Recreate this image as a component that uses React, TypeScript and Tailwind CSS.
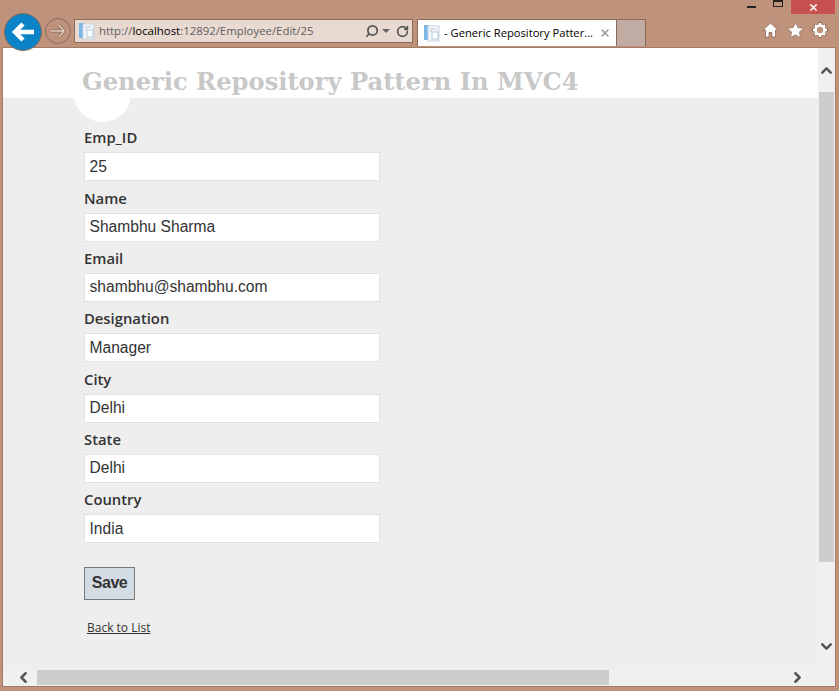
import { ChevronDown, ChevronLeft, ChevronRight, ChevronUp, RotateCw, Search, X } from 'lucide-react'

const FIELDS = [
  { label: 'Emp_ID', value: '25' },
  { label: 'Name', value: 'Shambhu Sharma' },
  { label: 'Email', value: 'shambhu@shambhu.com' },
  { label: 'Designation', value: 'Manager' },
  { label: 'City', value: 'Delhi' },
  { label: 'State', value: 'Delhi' },
  { label: 'Country', value: 'India' },
]

const UI_FONT = "font-['Open_Sans','Noto_Sans',sans-serif]"

function PageIcon() {
  return (
    <svg width="18" height="18" viewBox="0 0 18 18" className="shrink-0">
      <rect x="1" y="1" width="5" height="15" fill="#7db7e4" />
      <rect x="5" y="2" width="11" height="15" fill="#f2f6fa" stroke="#c6d3df" />
      <rect x="9" y="8" width="6" height="7" fill="#fff" stroke="#b9c9d8" />
      <path d="M7 5h6M7 7h2" stroke="#b9c9d8" />
    </svg>
  )
}

export default function App() {
  return (
    <div className={`w-[839px] h-[691px] bg-[#bf937b] overflow-hidden ${UI_FONT}`}>
      <div className="h-[47px] relative">
        <div className="flex justify-end items-start h-[14px] pr-[4px]">
          <div className="w-[9px] h-[2px] bg-[#222] mt-[6px] mr-[17px]" />
          <div className="w-[10px] h-[7px] border border-[#222] border-t-[2px] mr-[8px]" />
          <div className="w-[44px] h-[14px] bg-[#c75050] flex items-center justify-center">
            <X size={11} strokeWidth={3} color="#fff" />
          </div>
        </div>

        <div className="flex items-start pl-[4px] pt-[5px]">
          <div className="z-10 w-[38px] h-[38px] -mt-[6px] rounded-full bg-[#0a84c6] border border-[#8a6a58] flex items-center justify-center">
            <svg width="22" height="20" viewBox="0 0 22 20">
              <path d="M11 2 3 10l8 8M3 10h19" fill="none" stroke="#fff" strokeWidth="4.500" />
            </svg>
          </div>
          <div className="ml-[3px] w-[26px] h-[26px] -mt-[1px] rounded-full border border-[#8a6a58] flex items-center justify-center">
            <svg width="16" height="14" viewBox="0 0 16 14">
              <path d="M9 1l5 6-5 6M14 7H1" fill="none" stroke="#8a6a58" strokeWidth="2.800" />
              <path d="M9 1l5 6-5 6M14 7H1" fill="none" stroke="#e3cfc3" strokeWidth="1.400" />
            </svg>
          </div>
          <div className="ml-[3px] w-[339px] h-[24px] bg-[#e8d9d1] border border-[#8a6a58] flex items-center pl-[3px] pr-[3px] text-[11.4px] text-[#5f5f5f]">
            <PageIcon />
            <span className="ml-[3px] flex-1 whitespace-nowrap">
              http://<span className="text-black">localhost</span>:12892/Employee/Edit/25
            </span>
            <Search size={14} strokeWidth={3} color="#555" className="-scale-x-100 shrink-0" />
            <div className="ml-[3px] mr-[6px] w-0 h-0 border-x-[4px] border-x-transparent border-t-[4px] border-t-[#666]" />
            <RotateCw size={13} strokeWidth={3} color="#555" className="shrink-0" />
          </div>
          <div className="ml-[4px] w-[200px] h-[27px] bg-white border border-b-0 border-[#8a6a58] flex items-center pl-[5px] pr-[5px] text-[11.2px] text-black">
            <PageIcon />
            <span className="ml-[3px] flex-1 whitespace-nowrap">- Generic Repository Patter...</span>
            <X size={12} strokeWidth={3} color="#999" className="shrink-0" />
          </div>
          <div className="w-[29px] h-[27px] bg-[#c0aca2] border border-l-0 border-b-0 border-[#8a6a58]" />
          <div className="ml-auto mr-[11px] mt-[3px] flex items-center gap-[8px]">
            <svg width="17" height="16" viewBox="0 0 17 16">
              <path d="M8.500 1 1 8h2.500v7h3.500v-4.500h3V15h3.500V8H16z" fill="#fff" stroke="#8a6a58" strokeWidth="0.8" />
            </svg>
            <svg width="17" height="16" viewBox="0 0 17 16">
              <path d="M8.500 0.500l2.400 5.200 5.600 0.600-4.200 3.800 1.200 5.500-5-2.900-5 2.900 1.200-5.500L0.500 6.300l5.600-0.600z" fill="#fff" stroke="#8a6a58" strokeWidth="0.6" />
            </svg>
            <svg width="16" height="16" viewBox="0 0 16 16">
              <path d="M8 0v3M8 13v3M0 8h3M13 8h3M2.300 2.300l2.100 2.100M11.600 11.600l2.100 2.100M2.300 13.700l2.100-2.100M11.600 4.400l2.100-2.100" stroke="#8a6a58" strokeWidth="3" />
              <circle cx="8" cy="8" r="4.500" fill="none" stroke="#fff" strokeWidth="2.500" />
              <path d="M8 1v2M8 13v2M1 8h2M13 8h2M3 3l1.500 1.500M11.500 11.500 13 13M3 13l1.500-1.500M11.500 4.500 13 3" stroke="#fff" strokeWidth="2" />
            </svg>
          </div>
        </div>
      </div>

      <div className="ml-[2px] w-[834px] h-[640px] border border-[#a47a66] flex">
        <div className="flex-1 min-w-0 flex flex-col">
          <div className="relative flex-1 min-h-0 bg-[#eeeeee] overflow-hidden">
            <div className="absolute left-[71px] top-[18px] w-[57px] h-[56px] rounded-full bg-white" />
            <header className="relative h-[50px] bg-white pl-[79px] pt-[16px]">
              <h1 className="font-['DejaVu_Serif',serif] font-bold text-[24.2px] leading-[36px] text-[#c8c8c8] whitespace-nowrap">
                Generic Repository Pattern In MVC4
              </h1>
            </header>
            <form className="relative pl-[81px] pt-[31.3px]">
              <div className="flex flex-col gap-[8.33px]">
                {FIELDS.map(f => (
                  <div key={f.label}>
                    <label className="block h-[23px] leading-[17px] text-[14.8px] font-semibold text-[#333]">{f.label}</label>
                    <input
                      readOnly
                      value={f.value}
                      className="block w-[296px] h-[29px] bg-white border border-[#e2e2e2] px-[4.500px] font-['Liberation_Sans',sans-serif] text-[15.600px] text-[#333] outline-none"
                    />
                  </div>
                ))}
              </div>
              <button
                type="button"
                className="block mt-[23.7px] w-[51px] h-[33px] bg-[#d3dce3] border border-[#7a7a7a] font-['Liberation_Sans',sans-serif] font-bold text-[16px] tracking-[-0.5px] text-[#333]"
              >
                Save
              </button>
              <a className="inline-block mt-[19px] ml-[3px] text-[12px] leading-[18px] text-[#333] underline">Back to List</a>
            </form>
          </div>
          <div className="h-[17px] bg-[#f0f0f0] flex items-center pb-[1px]">
            <div className="w-[34px] flex justify-end pr-[5px]">
              <ChevronLeft size={17} strokeWidth={3.5} color="#555" />
            </div>
            <div className="w-[572px] h-[15px] bg-[#cdcdcd]" />
            <div className="flex-1 flex justify-end pr-[12px]">
              <ChevronRight size={17} strokeWidth={3.5} color="#555" />
            </div>
          </div>
        </div>

        <div className="w-[17px] bg-[#f0f0f0] flex flex-col items-center">
          <div className="h-[44px] flex items-center justify-center">
            <ChevronUp size={17} strokeWidth={3.5} color="#555" />
          </div>
          <div className="w-[15px] h-[470px] bg-[#cdcdcd]" />
          <div className="mt-[76px]">
            <ChevronDown size={17} strokeWidth={3.5} color="#555" />
          </div>
        </div>
      </div>
    </div>
  )
}
